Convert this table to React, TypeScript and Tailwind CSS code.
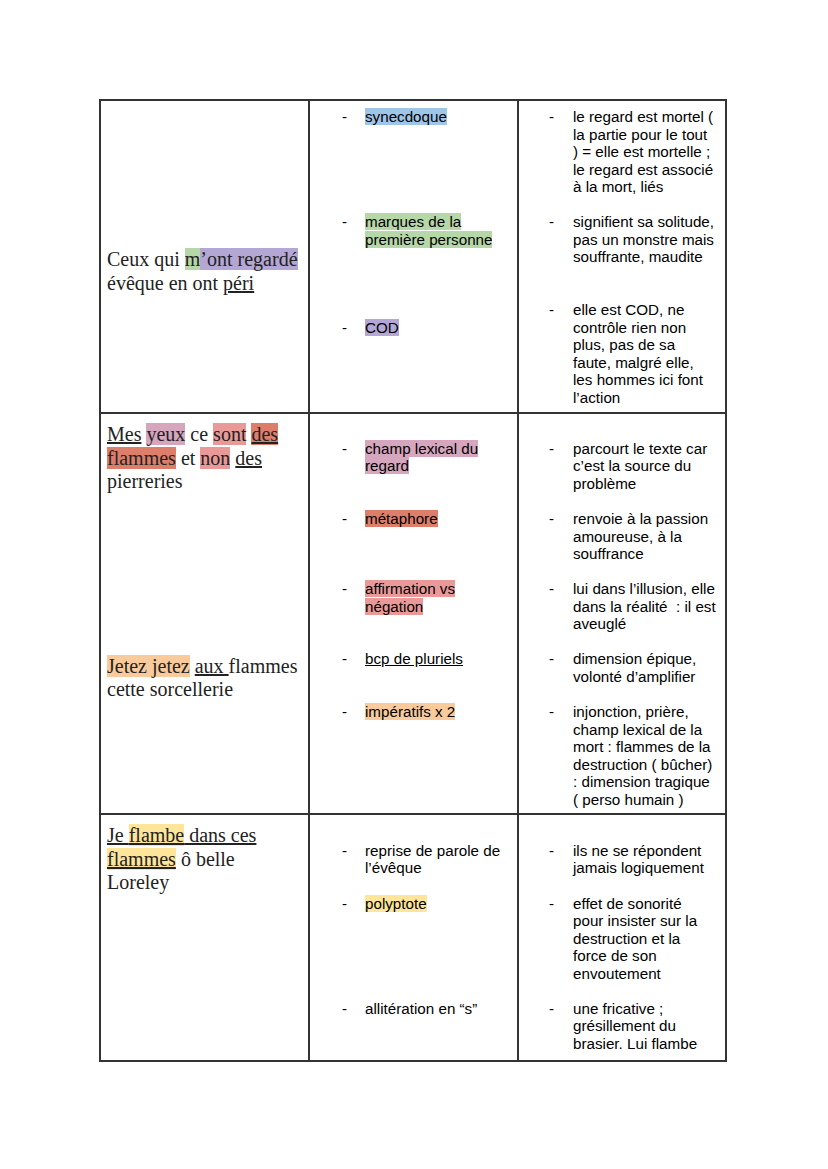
import type { ReactNode } from "react";

const serif = "font-['Liberation_Serif','Times_New_Roman',serif] text-[20px] leading-[23.5px] text-[#222]";

function L({ dash, children, w }: { dash?: boolean; children?: ReactNode; w: string }) {
	return (
		<div className="flex h-[17.55px] whitespace-pre">
			<span className={w}>{dash ? "-" : ""}</span>
			<span>{children}</span>
		</div>
	);
}

function Blank({ n = 1 }: { n?: number }) {
	return (
		<>
			{Array.from({ length: n }).map((_, i) => (
				<div key={i} className="h-[17.55px]" />
			))}
		</>
	);
}

// column 2 and column 3 lines
const A = ({ dash, children }: { dash?: boolean; children?: ReactNode }) => (
	<L dash={dash} w="w-[23px] shrink-0">
		{children}
	</L>
);
const B = ({ dash, children }: { dash?: boolean; children?: ReactNode }) => (
	<L dash={dash} w="w-[24px] shrink-0">
		{children}
	</L>
);

export default function App() {
	const cell = "border-r-2 border-b-2 border-[#333]";
	return (
		<div className="min-h-[1169px] w-[828px] bg-white pt-[99px] pl-[99px] text-black">
			<div className="grid w-[628px] grid-cols-[209px_209px_208px] border-t-2 border-l-2 border-[#333] font-['Liberation_Sans',Arial,sans-serif] text-[15.2px] leading-[17.55px]">
				{/* row 1 */}
				<div className={`${cell} pt-[7px] pb-[6px] pl-[6px]`}>
					<p className={`${serif} mt-[140px]`}>
						Ceux qui <span className="bg-[#b6d7a8]">m</span>
						<span className="bg-[#b4a7d6]">’ont regardé</span>
						<br />
						évêque en ont <span className="underline">péri</span>
					</p>
				</div>
				<div className={`${cell} pt-[7px] pb-[6px] pl-[32px]`}>
					<A dash>
						<span className="bg-[#9fc5e8]">synecdoque</span>
					</A>
					<Blank n={5} />
					<A dash>
						<span className="bg-[#b6d7a8]">marques de la</span>
					</A>
					<A>
						<span className="bg-[#b6d7a8]">première personne</span>
					</A>
					<Blank n={4} />
					<A dash>
						<span className="bg-[#b4a7d6]">COD</span>
					</A>
				</div>
				<div className={`${cell} pt-[7px] pb-[6px] pl-[30px]`}>
					<B dash>le regard est mortel (</B>
					<B>la partie pour le tout</B>
					<B>) = elle est mortelle ;</B>
					<B>le regard est associé</B>
					<B>à la mort, liés</B>
					<Blank />
					<B dash>signifient sa solitude,</B>
					<B>pas un monstre mais</B>
					<B>souffrante, maudite</B>
					<Blank n={2} />
					<B dash>elle est COD, ne</B>
					<B>contrôle rien non</B>
					<B>plus, pas de sa</B>
					<B>faute, malgré elle,</B>
					<B>les hommes ici font</B>
					<B>l’action</B>
				</div>

				{/* row 2 */}
				<div className={`${cell} pt-[8px] pb-[5px] pl-[6px]`}>
					<p className={`${serif} mt-[1px]`}>
						<span className="underline">Mes</span> <span className="bg-[#d5a6bd]">yeux</span> ce{" "}
						<span className="bg-[#ea9999]">sont</span>{" "}
						<span className="bg-[#dd7e6b] underline">des</span>
						<br />
						<span className="bg-[#dd7e6b]">flammes</span> et <span className="bg-[#ea9999]">non</span>{" "}
						<span className="underline">des</span>
						<br />
						pierreries
					</p>
					<p className={`${serif} mt-[161px]`}>
						<span className="bg-[#f9cb9c]">Jetez jetez</span> <span className="underline">aux </span>flammes
						<br />
						cette sorcellerie
					</p>
				</div>
				<div className={`${cell} pt-[8px] pb-[5px] pl-[32px]`}>
					<Blank />
					<A dash>
						<span className="bg-[#d5a6bd]">champ lexical du</span>
					</A>
					<A>
						<span className="bg-[#d5a6bd]">regard</span>
					</A>
					<Blank n={2} />
					<A dash>
						<span className="bg-[#dd7e6b]">métaphore</span>
					</A>
					<Blank n={3} />
					<A dash>
						<span className="bg-[#ea9999]">affirmation vs</span>
					</A>
					<A>
						<span className="bg-[#ea9999]">négation</span>
					</A>
					<Blank n={2} />
					<A dash>
						<span className="underline">bcp de pluriels</span>
					</A>
					<Blank n={2} />
					<A dash>
						<span className="bg-[#f9cb9c]">impératifs x 2</span>
					</A>
				</div>
				<div className={`${cell} pt-[8px] pb-[5px] pl-[30px]`}>
					<Blank />
					<B dash>parcourt le texte car</B>
					<B>c’est la source du</B>
					<B>problème</B>
					<Blank />
					<B dash>renvoie à la passion</B>
					<B>amoureuse, à la</B>
					<B>souffrance</B>
					<Blank />
					<B dash>lui dans l’illusion, elle</B>
					<B>dans la réalité  : il est</B>
					<B>aveuglé</B>
					<Blank />
					<B dash>dimension épique,</B>
					<B>volonté d’amplifier</B>
					<Blank />
					<B dash>injonction, prière,</B>
					<B>champ lexical de la</B>
					<B>mort : flammes de la</B>
					<B>destruction ( bûcher)</B>
					<B>: dimension tragique</B>
					<B>( perso humain )</B>
				</div>

				{/* row 3 */}
				<div className={`${cell} pt-[9px] pb-[8px] pl-[6px]`}>
					<p className={serif}>
						<span className="underline">
							Je <span className="bg-[#ffe599]">flambe</span> dans ces
						</span>
						<br />
						<span className="bg-[#ffe599] underline">flammes</span> ô belle
						<br />
						Loreley
					</p>
				</div>
				<div className={`${cell} pt-[9px] pb-[8px] pl-[32px]`}>
					<Blank />
					<A dash>reprise de parole de</A>
					<A>l’évêque</A>
					<Blank />
					<A dash>
						<span className="bg-[#ffe599]">polyptote</span>
					</A>
					<Blank n={5} />
					<A dash>allitération en “s”</A>
				</div>
				<div className={`${cell} pt-[9px] pb-[8px] pl-[30px]`}>
					<Blank />
					<B dash>ils ne se répondent</B>
					<B>jamais logiquement</B>
					<Blank />
					<B dash>effet de sonorité</B>
					<B>pour insister sur la</B>
					<B>destruction et la</B>
					<B>force de son</B>
					<B>envoutement</B>
					<Blank />
					<B dash>une fricative ;</B>
					<B>grésillement du</B>
					<B>brasier. Lui flambe</B>
				</div>
			</div>
		</div>
	);
}
